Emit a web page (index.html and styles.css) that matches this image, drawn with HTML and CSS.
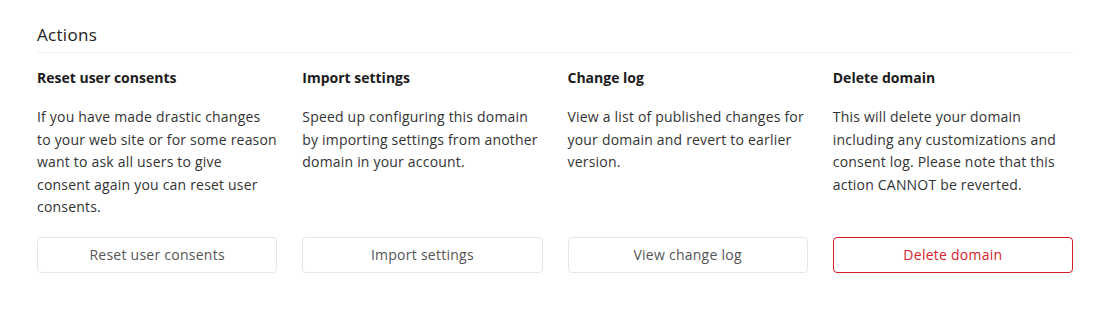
FILE: index.html
```html
<!DOCTYPE html>
<html lang="en">
<head>
    <meta charset="UTF-8">
    <meta name="viewport" content="width=device-width, initial-scale=1.0">
    <title>Domain actions</title>

    <link rel="stylesheet" href="styles.css">
</head>
<body>
    <section class="actions">
        <h2>Actions</h2>

        <div class="actionGrid">
            <div class="action">
                <h4>Reset user consents</h4>
                <p>If you have made drastic changes to your web site or for some reason want to ask all users to give consent again you can reset user consents.</p>
                <button type="button">Reset user consents</button>
            </div>

            <div class="action">
                <h4>Import settings</h4>
                <p>Speed up configuring this domain by importing settings from another domain in your account.</p>
                <button type="button">Import settings</button>
            </div>

            <div class="action">
                <h4>Change log</h4>
                <p>View a list of published changes for your domain and revert to earlier version.</p>
                <button type="button">View change log</button>
            </div>

            <div class="action">
                <h4>Delete domain</h4>
                <p>This will delete your domain including any customizations and consent log. Please note that this action CANNOT be reverted.</p>
                <button type="button" class="danger">Delete domain</button>
            </div>
        </div>
    </section>
</body>
</html>
```

FILE: styles.css
```css
body{
    margin: 0;
    background: #fff;
    font-family: "Open Sans", "Liberation Sans", sans-serif;
    color: #333;
}

.actions{
    padding: 23px 35px 0 37px;
}

.actions h2{
    margin: 0;
    padding-bottom: 5px;
    font-size: 17px;
    line-height: 24px;
    font-weight: 500;
    letter-spacing: 0.3px;
    color: #222;
    border-bottom: 1px solid #f1f2f4;
}

.actionGrid{
    display: grid;
    grid-template-columns: repeat(4, 1fr);
    column-gap: 25px;
    margin-top: 14px;
}

.action{
    display: flex;
    flex-direction: column;
}

.action h4{
    margin: 0;
    font-size: 14px;
    line-height: 22px;
    font-weight: 700;
    color: #1b1b1b;
}

.action p{
    margin: 17px 0 18px;
    font-size: 14px;
    line-height: 22.5px;
    letter-spacing: 0.2px;
    color: #333;
}

.action button{
    margin-top: auto;
    height: 36px;
    background: #fff;
    border: 1px solid #e3e5e9;
    border-radius: 4px;
    font-family: inherit;
    font-size: 14px;
    letter-spacing: 0.25px;
    color: #555;
    cursor: pointer;
}

.action button.danger{
    border-color: #d71f27;
    color: #d6232d;
}
```
